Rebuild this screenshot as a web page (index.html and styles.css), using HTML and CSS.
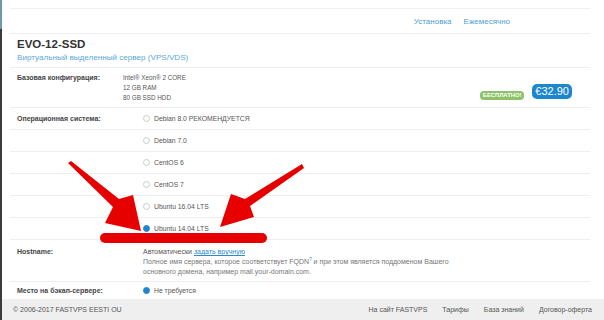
FILE: index.html
```html
<!DOCTYPE html>
<html>
<head>
	<title>EVO-12-SSD</title>
	<link rel="stylesheet" href="styles.css">
</head>
<body>
<div class="page">
  <div class="main">
    <div class="strip"></div>
    <div class="tabs">
      <a>Установка</a>
      <a>Ежемесячно</a>
    </div>

    <div class="title">
      <h1>EVO-12-SSD</h1>
      <div class="sub">Виртуальный выделенный сервер (VPS/VDS)</div>
    </div>

    <div class="row config">
      <div class="label">Базовая конфигурация:</div>
      <div class="value">
        <div>Intel® Xeon® 2 CORE</div>
        <div>12 GB RAM</div>
        <div>80 GB SSD HDD</div>
      </div>
      <div class="prices">
        <span class="free">БЕСПЛАТНО!</span>
        <span class="price">€32.90</span>
      </div>
    </div>

    <div class="row opt">
      <div class="label">Операционная система:</div>
      <div class="value"><span class="radio"></span>Debian 8.0 РЕКОМЕНДУЕТСЯ</div>
    </div>
    <div class="row opt">
      <div class="label"></div>
      <div class="value"><span class="radio"></span>Debian 7.0</div>
    </div>
    <div class="row opt">
      <div class="label"></div>
      <div class="value"><span class="radio"></span>CentOS 6</div>
    </div>
    <div class="row opt">
      <div class="label"></div>
      <div class="value"><span class="radio"></span>CentOS 7</div>
    </div>
    <div class="row opt">
      <div class="label"></div>
      <div class="value"><span class="radio"></span>Ubuntu 16.04 LTS</div>
    </div>
    <div class="row opt">
      <div class="label"></div>
      <div class="value"><span class="radio on"></span>Ubuntu 14.04 LTS</div>
    </div>

    <div class="row host">
      <div class="label">Hostname:</div>
      <div class="value">
        <div class="auto">Автоматически <a>задать вручную</a></div>
        <div class="desc">Полное имя сервера, которое соответствует FQDN<sup>?</sup> и при этом является поддоменом Вашего основного домена, например mail.your-domain.com.</div>
      </div>
    </div>

    <div class="row backup">
      <div class="label">Место на бэкап-сервере:</div>
      <div class="value"><span class="radio on"></span>Не требуется</div>
    </div>
  </div>

  <div class="footer">
    <span>© 2006-2017 FASTVPS EESTI OU</span>
    <div class="links">
      <a>На сайт FASTVPS</a>
      <a>Тарифы</a>
      <a>База знаний</a>
      <a>Договор-оферта</a>
    </div>
  </div>

  <svg class="marks" width="604" height="320" viewBox="0 0 604 320">
    <polygon points="68,163 71,161 119,199 133,195 141,231 105,223 113,207" />
    <polygon points="302,164 304,168 250,206 254,217 220,227 231,194 245,199" />
    <rect x="100" y="233" width="167" height="10" rx="5" />
  </svg>
</div>
</body>
</html>
```

FILE: styles.css
```css
 body {
     margin: 0;
     background: #fff;
     font-family: "Liberation Sans", Arial, sans-serif;
     color: #555;
 }

 .page {
     position: relative;
     display: flex;
     flex-direction: column;
     height: 320px;
     border-left: 2px solid #3b3b3b;
     border-image: linear-gradient(#6d97b5 0 30px, #3b3b3b 30px) 1;
     box-sizing: border-box;
 }

 .main {
     flex: 1;
     padding: 0 14px 0 8px;
 }

 .strip {
     height: 8px;
     border-bottom: 1px solid #f0f0f0;
 }

 .tabs {
     display: flex;
     justify-content: flex-end;
     align-items: center;
     gap: 12px;
     height: 24px;
     padding-right: 80px;
     border-bottom: 1px solid #eee;
     font-size: 8px;
 }
 .tabs a {
     color: #4c9fd6;
 }

 .title {
     padding: 2px 7px 3px;
 }
 .title h1 {
     margin: 0;
     font-size: 11.5px;
     line-height: 16px;
     color: #333;
 }
 .sub {
     font-size: 8.1px;
     line-height: 12px;
     color: #5aa8dc;
 }

 .row {
     display: grid;
     grid-template-columns: 106px 1fr auto;
     border-top: 1px solid #eee;
     padding-left: 7px;
     font-size: 6.8px;
 }
 .label {
     font-weight: bold;
     font-size: 7px;
     color: #444;
 }

 .config {
     padding: 5px 18px 5px 7px;
     line-height: 10px;
     height: 29px;
 }
 .config .value {
     font-size: 6.3px;
 }
 .prices {
     display: flex;
     align-items: flex-end;
     gap: 8px;
     align-self: end;
     margin-bottom: 3px;
 }
 .free {
     background: #8dc26b;
     color: #fff;
     font-size: 5.8px;
     font-weight: bold;
     line-height: 9px;
     padding: 0 3px;
     border-radius: 4px;
 }
 .price {
     background: #1d86cf;
     color: #fff;
     font-size: 11px;
     line-height: 15px;
     padding: 0 3px;
     border-radius: 5px;
     margin-bottom: 1px;
 }

 .opt {
     height: 21px;
     align-items: center;
 }
 .opt .value, .backup .value {
     display: flex;
     align-items: center;
     padding-left: 20px;
 }

 .radio {
     width: 5px;
     height: 5px;
     border: 1px solid #ccc;
     border-radius: 50%;
     margin-right: 4px;
 }
 .radio.on {
     background: #1f86cc;
     border-color: #1f86cc;
 }

 .host {
     padding: 7px 0 4px 7px;
     line-height: 10px;
     font-size: 7px;
 }
 .host .value {
     padding-left: 20px;
 }
 .auto a {
     color: #2a8ccf;
     text-decoration: underline;
 }
 .desc {
     max-width: 318px;
     color: #777;
 }
 .desc sup {
     color: #2a8ccf;
     font-size: 4.5px;
     line-height: 0;
 }

 .backup {
     height: 17px;
     align-items: center;
 }

 .footer {
     display: flex;
     justify-content: space-between;
     align-items: center;
     height: 21px;
     background: #efefef;
     padding: 0 12px 0 11px;
     font-size: 7px;
     color: #555;
 }
 .links {
     display: flex;
     gap: 15px;
 }

 .marks {
     position: absolute;
     left: -2px;
     top: 0;
     pointer-events: none;
 }
 .marks polygon, .marks rect {
     fill: #e60000;
 }
```
